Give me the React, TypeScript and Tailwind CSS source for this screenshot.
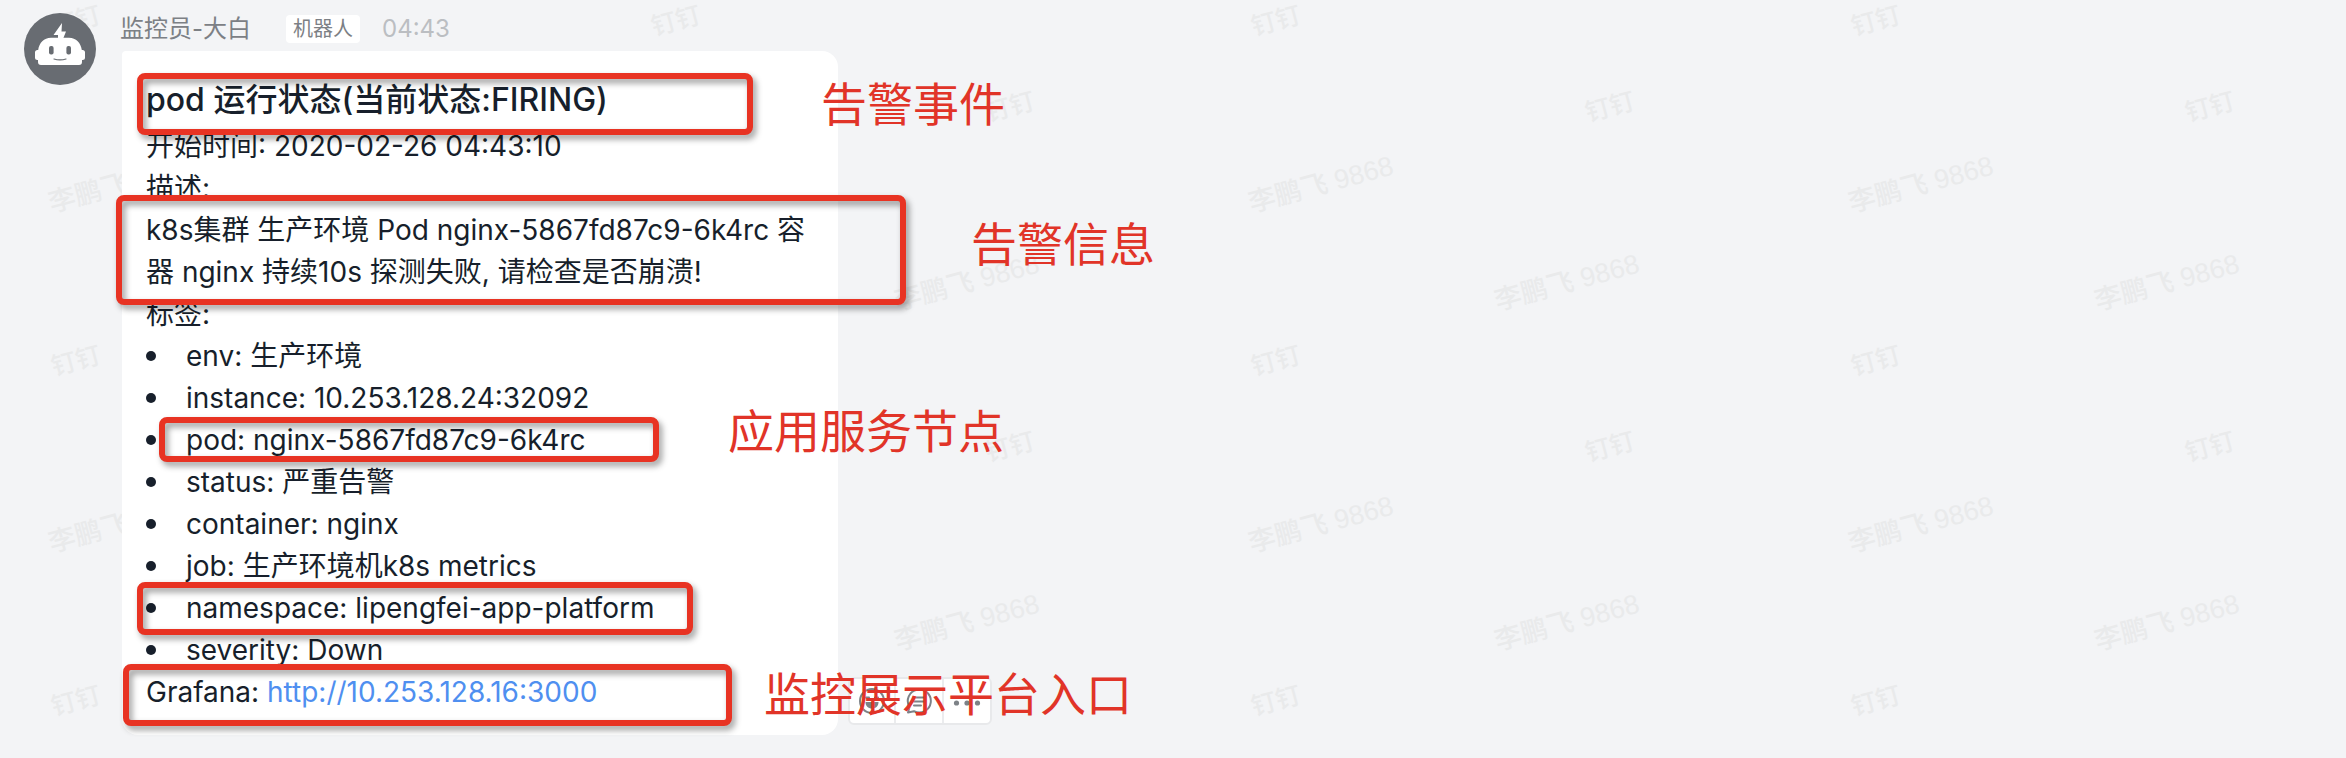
import React from "react";

const labels: { name: string; value: string }[] = [
  { name: "env", value: "生产环境" },
  { name: "instance", value: "10.253.128.24:32092" },
  { name: "pod", value: "nginx-5867fd87c9-6k4rc" },
  { name: "status", value: "严重告警" },
  { name: "container", value: "nginx" },
  { name: "job", value: "生产环境机k8s metrics" },
  { name: "namespace", value: "lipengfei-app-platform" },
  { name: "severity", value: "Down" },
];

// Highlight frames, placed relative to the message bubble.
const frames: string[] = [
  "left-[15px] top-[22px] w-[616px] h-[62px]",
  "left-[-6px] top-[144px] w-[790px] h-[110px]",
  "left-[37px] top-[366px] w-[500px] h-[45px]",
  "left-[15px] top-[531px] w-[556px] h-[53px]",
  "left-[1px] top-[613px] w-[609px] h-[62px]",
];

const notes: { text: string; place: string }[] = [
  { text: "告警事件", place: "left-[699px] top-[25px]" },
  { text: "告警信息", place: "left-[849px] top-[165px]" },
  { text: "应用服务节点", place: "left-[606px] top-[352px]" },
  { text: "监控展示平台入口", place: "left-[642px] top-[615px]" },
];

const COLUMNS = 4;
const ROWS = 3;

function Watermark() {
  const mark =
    "absolute -translate-x-1/2 -translate-y-1/2 -rotate-15 whitespace-nowrap leading-none font-medium";
  return (
    <div
      aria-hidden="true"
      className="absolute inset-0 overflow-hidden font-['Liberation_Sans','Noto_Sans_CJK_SC',sans-serif] text-[#e9eaeb]"
    >
      <div className="grid w-[2400px] grid-cols-4">
        {Array.from({ length: COLUMNS * ROWS }, (_, i) => {
          const lastRow = i >= COLUMNS * (ROWS - 1);
          const behindBubble = i % COLUMNS === 0;
          return (
            <div key={i} className={lastRow ? "relative h-10" : "relative h-[340px]"}>
              <span className={`${mark} left-[76px] top-[21px] text-[25px]`}>钉钉</span>
              {!lastRow && <span className={`${mark} left-[121px] top-[185px] text-[27px]`}>李鹏飞 9868</span>}
              {!lastRow && !behindBubble && (
                <>
                  <span className={`${mark} left-[410px] top-[107px] text-[25px]`}>钉钉</span>
                  <span className={`${mark} left-[367px] top-[283px] text-[27px]`}>李鹏飞 9868</span>
                </>
              )}
            </div>
          );
        })}
      </div>
    </div>
  );
}

function RobotAvatar() {
  return (
    <svg viewBox="0 0 72 72" className="relative size-[72px] shrink-0" role="img" aria-label="机器人">
      <circle cx="36" cy="36" r="36" fill="#686c72" />
      <path d="M38 10 L29.5 22 H34 V26 H39 L42 18.500 H37.500 Z" fill="#fff" />
      <path
        d="M27 24.700 H45 C52 24.700 57 30 57.800 37 H58.500 Q61 37 61 39.500 V44.500 Q61 47 58.500 47 H58 V49 Q58 52 55 52 H17 Q14 52 14 49 V47 H13.500 Q11 47 11 44.500 V39.500 Q11 37 13.500 37 H14.200 C15 30 20 24.700 27 24.700 Z"
        fill="#fff"
      />
      <rect x="25" y="33" width="4.600" height="8.400" rx="2" fill="#686c72" />
      <rect x="42.400" y="33" width="4.600" height="8.400" rx="2" fill="#686c72" />
      <path d="M30 46 Q36 47.800 42 46" stroke="#686c72" strokeWidth="1.200" fill="none" strokeLinecap="round" />
    </svg>
  );
}

function SmileIcon() {
  return (
    <svg viewBox="0 0 28 28" className="size-7" fill="none" stroke="#7d8287" strokeWidth="2">
      <circle cx="14" cy="14" r="12" />
      <path d="M7.500 15 H20.500 C20.500 19 18 21.500 14 21.500 C10 21.500 7.500 19 7.500 15 Z" fill="#7d8287" stroke="none" />
      <path d="M8 10.500 L11 10.500 M17 10.500 L20 10.500" strokeLinecap="round" />
    </svg>
  );
}

function ReplyIcon() {
  return (
    <svg viewBox="0 0 28 28" className="size-7" fill="none" stroke="#7d8287" strokeWidth="2" strokeLinecap="round">
      <path d="M3 25.500 L4.500 20 A11.500 11.500 0 1 1 9 24.200 Z" strokeLinejoin="round" />
      <path d="M9 10.500 H20 M9 14.500 H20 M9 18.500 H16" />
    </svg>
  );
}

function MoreIcon() {
  return (
    <svg viewBox="0 0 28 28" className="size-7" fill="#7d8287">
      <circle cx="3.500" cy="16" r="2.600" />
      <circle cx="14" cy="16" r="2.600" />
      <circle cx="24.500" cy="16" r="2.600" />
    </svg>
  );
}

export default function App() {
  return (
    <main className="relative min-h-screen overflow-hidden bg-[#f3f4f6] font-['Inter','Noto_Sans_CJK_SC',sans-serif] text-[#171f2b]">
      <Watermark />
      <article className="relative flex items-start gap-6 pb-[23px] pl-6 pt-[13px]">
        <RobotAvatar />
        <div>
          <header className="flex h-[38px] items-start">
            <span className="text-[24px] leading-8 text-[#7c8085]">监控员-大白</span>
            <span className="ml-[35px] mt-0.5 rounded-sm bg-white px-[7px] text-[20px] leading-7 text-[#7c8085]">
              机器人
            </span>
            <time className="ml-[22px] text-[24px] leading-8 text-[#bbbec2]">04:43</time>
          </header>

          <div className="relative ml-0.5 flex items-end gap-2.5">
            <section className="w-[716px] rounded-2xl rounded-tl-sm bg-white px-6 pb-[22px] pt-6 text-[28px] leading-[42px]">
              <h1 className="text-[32px] leading-[50px] font-medium">pod 运行状态(当前状态:FIRING)</h1>
              <p>开始时间: 2020-02-26 04:43:10</p>
              <p>描述:</p>
              <p>k8s集群 生产环境 Pod nginx-5867fd87c9-6k4rc 容器 nginx 持续10s 探测失败, 请检查是否崩溃!</p>
              <p>标签:</p>
              <ul>
                {labels.map((label) => (
                  <li key={label.name} className="flex items-center gap-[30px]">
                    <span className="size-2.5 rounded-full bg-[#171f2b]" />
                    {label.name}: {label.value}
                  </li>
                ))}
              </ul>
              <p>
                Grafana:{" "}
                <a href="http://10.253.128.16:3000" className="text-[#4f8ff0]">
                  http://10.253.128.16:3000
                </a>
              </p>
            </section>

            <div className="mb-2.5 flex h-12 divide-x-2 divide-[#ebecee] rounded-md border-2 border-[#e8e9eb] bg-white">
              <button type="button" aria-label="表情" className="flex w-[46px] items-center justify-center">
                <SmileIcon />
              </button>
              <button type="button" aria-label="回复" className="flex w-12 items-center justify-center">
                <ReplyIcon />
              </button>
              <button type="button" aria-label="更多" className="flex w-[46px] items-center justify-center">
                <MoreIcon />
              </button>
            </div>

            {frames.map((place) => (
              <div
                key={place}
                className={`pointer-events-none absolute rounded-lg border-6 border-[#e83323] drop-shadow-[3px_4px_3px_rgba(0,0,0,0.4)] ${place}`}
              />
            ))}
            {notes.map((note) => (
              <p
                key={note.text}
                className={`pointer-events-none absolute whitespace-nowrap text-[46px] leading-[56px] text-[#e13428] ${note.place}`}
              >
                {note.text}
              </p>
            ))}
          </div>
        </div>
      </article>
    </main>
  );
}
